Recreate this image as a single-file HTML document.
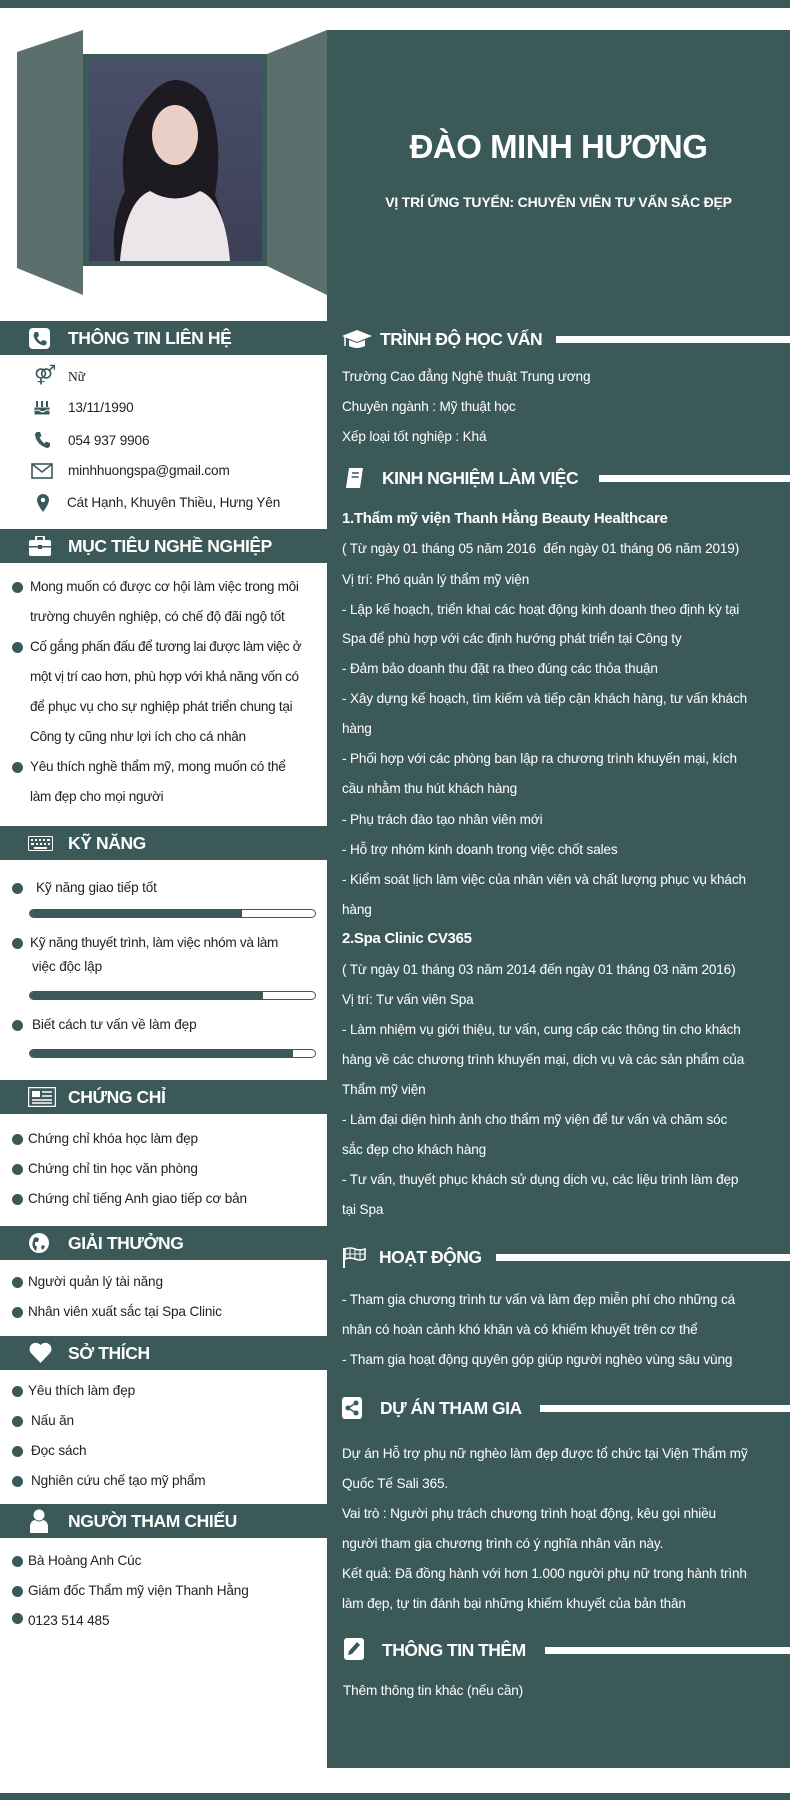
<!DOCTYPE html>
<html><head><meta charset="utf-8">
<style>
*{margin:0;padding:0;box-sizing:border-box}
body{width:790px;height:1800px;position:relative;background:#fff;font-family:"Liberation Sans",Arial,sans-serif;overflow:hidden;color:#222}
.a{position:absolute;white-space:nowrap}
.bar{position:absolute;background:#3c5959}
.t{position:absolute;white-space:nowrap;font-size:13.6px;line-height:20px;letter-spacing:-0.15px}
.w{color:#fff}
.lh{position:absolute;left:0;width:327px;height:34px;background:#3c5959}
.lh span{position:absolute;left:68px;top:7px;font-size:17.5px;font-weight:bold;color:#fff;line-height:20px;letter-spacing:-0.4px}
.rh{position:absolute;left:342px;height:24px;right:0}
.rh span{position:absolute;left:40px;top:2px;font-size:17.5px;font-weight:bold;color:#fff;line-height:20px;letter-spacing:-0.5px}
.rh i{position:absolute;right:0;height:7px;top:9px;background:#fff}
.dot{position:absolute;left:12px;width:11px;height:11px;border-radius:50%;background:#3c5959}
.sk{position:absolute;left:29px;width:287px;height:9px;border:1px solid #3c5959;border-radius:5px;overflow:hidden;background:#fff}
.sk b{display:block;height:100%;background:#3c5959}
</style></head><body>
<div class="bar" style="left:0;top:0;width:790px;height:8px"></div>
<div class="bar" style="left:327px;top:30px;width:463px;height:1738px"></div>
<div class="bar" style="left:0;top:1793px;width:790px;height:7px"></div>

<svg class="a" style="left:0;top:0" width="330" height="300">
<polygon points="17,52 83,30 83,295 17,268" fill="#5b706c"/>
<polygon points="267,54 327,30 327,295 267,266" fill="#5b706c"/>
<rect x="83" y="54" width="184" height="212" fill="#3c5959"/>
<defs><linearGradient id="g" x1="0" y1="0" x2="0" y2="1"><stop offset="0" stop-color="#4a4f6a"/><stop offset="1" stop-color="#3c3f55"/></linearGradient></defs>
<rect x="89" y="60" width="173" height="201" fill="url(#g)"/>
<path d="M150,95 q25,-30 55,0 q20,40 10,100 q15,40 10,66 h-110 q-5,-40 10,-70 q-10,-60 25,-96z" fill="#1d1a22"/>
<ellipse cx="175" cy="135" rx="23" ry="30" fill="#e9cfc6"/>
<path d="M120,261 q5,-60 30,-70 q25,15 50,0 q25,10 30,70z" fill="#ece6ea"/>
</svg>

<div class="a w" style="left:327px;width:463px;text-align:center;top:127px;font-size:33px;font-weight:bold;line-height:40px;letter-spacing:-0.5px">ĐÀO MINH HƯƠNG</div>
<div class="a w" style="left:327px;width:463px;text-align:center;top:191px;font-size:14px;font-weight:bold;line-height:22px;letter-spacing:-0.2px">VỊ TRÍ ỨNG TUYỂN: CHUYÊN VIÊN TƯ VẤN SẮC ĐẸP</div>

<!-- LEFT -->
<div class="lh" style="top:321px"><svg class="a" style="left:29px;top:7px" width="21" height="21"><rect width="21" height="21" rx="4" fill="#fff"/><path d="M6,4 l3,0 l1,4 l-2,1.5 q1.5,3 4,4.5 l1.5,-2 l4,1 l0,3 q-1,1.5 -3,1.5 q-8,-2 -10,-10 q0,-2 1.5,-3.5z" fill="#3c5959"/></svg><span>THÔNG TIN LIÊN HỆ</span></div>
<div class="t" style="left:34px;top:366px;font-size:19px;color:#3c5959">⚤</div>
<div class="t" style="left:68px;top:367px;font-family:'Liberation Serif',serif">Nữ</div>
<svg class="a" style="left:33px;top:398px" width="18" height="18"><path d="M1,9 h16 v8 h-16z M2,13 q3,-2 5,0 q3,2 5,0 q3,-2 5,0" fill="#3c5959" stroke="#fff" stroke-width="1"/><rect x="3" y="3" width="2" height="6" fill="#3c5959"/><rect x="8" y="3" width="2" height="6" fill="#3c5959"/><rect x="13" y="3" width="2" height="6" fill="#3c5959"/></svg>
<div class="t" style="left:68px;top:398px">13/11/1990</div>
<svg class="a" style="left:34px;top:431px" width="18" height="18"><path d="M3,1 l3,0 l1.5,4 l-2,1.5 q2,4 5,6 l1.5,-2 l4,1.5 l0,3 q-1,2 -3,2 q-10,-3 -12,-13 q0,-2 2,-3z" fill="#3c5959"/></svg>
<div class="t" style="left:68px;top:431px">054 937 9906</div>
<svg class="a" style="left:31px;top:463px" width="22" height="16"><rect x="1" y="1" width="20" height="14" fill="none" stroke="#3c5959" stroke-width="1.6"/><path d="M1,1 l10,8 l10,-8" fill="none" stroke="#3c5959" stroke-width="1.6"/></svg>
<div class="t" style="left:68px;top:461px">minhhuongspa@gmail.com</div>
<svg class="a" style="left:37px;top:494px" width="12" height="18"><path d="M6,0 a6,6 0 0 1 6,6 q0,4 -6,12 q-6,-8 -6,-12 a6,6 0 0 1 6,-6z" fill="#3c5959"/><circle cx="6" cy="6" r="2.2" fill="#fff"/></svg>
<div class="t" style="left:67px;top:493px">Cát Hạnh, Khuyên Thiều, Hưng Yên</div>

<div class="lh" style="top:529px"><svg class="a" style="left:29px;top:7px" width="22" height="20"><rect x="7" y="0" width="8" height="5" rx="1" fill="none" stroke="#fff" stroke-width="2"/><rect x="0" y="4" width="22" height="16" rx="2" fill="#fff"/><rect x="0" y="10" width="22" height="1.5" fill="#3c5959"/><rect x="9" y="9" width="4" height="4" fill="#3c5959"/></svg><span>MỤC TIÊU NGHỀ NGHIỆP</span></div>
<div class="dot" style="top:582px"></div><div class="t" style="left:30px;top:577px;letter-spacing:-0.3px">Mong muốn có được cơ hội làm việc trong môi</div>
<div class="t" style="left:30px;top:607px;letter-spacing:-0.3px">trường chuyên nghiệp, có chế độ đãi ngộ tốt</div>
<div class="dot" style="top:642px"></div><div class="t" style="left:30px;top:637px;letter-spacing:-0.45px">Cố gắng phấn đấu để tương lai được làm việc ở</div>
<div class="t" style="left:30px;top:667px;letter-spacing:-0.45px">một vị trí cao hơn, phù hợp với khả năng vốn có</div>
<div class="t" style="left:30px;top:697px;letter-spacing:-0.3px">để phục vụ cho sự nghiệp phát triển chung tại</div>
<div class="t" style="left:30px;top:727px;letter-spacing:-0.3px">Công ty cũng như lợi ích cho cá nhân</div>
<div class="dot" style="top:762px"></div><div class="t" style="left:30px;top:757px;letter-spacing:-0.3px">Yêu thích nghề thẩm mỹ, mong muốn có thể</div>
<div class="t" style="left:30px;top:787px;letter-spacing:-0.3px">làm đẹp cho mọi người</div>

<div class="lh" style="top:826px"><svg class="a" style="left:28px;top:10px" width="25" height="15"><rect x="0.5" y="0.5" width="24" height="14" rx="1" fill="none" stroke="#fff"/><path d="M3,3h2v2h-2zM7,3h2v2h-2zM11,3h2v2h-2zM15,3h2v2h-2zM19,3h3v2h-3zM3,7h3v2h-3zM8,7h2v2h-2zM12,7h2v2h-2zM16,7h2v2h-2zM20,7h2v2h-2zM6,11h13v2h-13z" fill="#fff"/></svg><span>KỸ NĂNG</span></div>
<div class="dot" style="top:883px"></div><div class="t" style="left:36px;top:878px">Kỹ năng giao tiếp tốt</div>
<div class="sk" style="top:909px"><b style="width:212px"></b></div>
<div class="dot" style="top:938px"></div><div class="t" style="left:30px;top:933px;letter-spacing:-0.3px">Kỹ năng thuyết trình, làm việc nhóm và làm</div>
<div class="t" style="left:32px;top:957px">việc độc lập</div>
<div class="sk" style="top:991px"><b style="width:233px"></b></div>
<div class="dot" style="top:1020px"></div><div class="t" style="left:32px;top:1015px">Biết cách tư vấn về làm đẹp</div>
<div class="sk" style="top:1049px"><b style="width:263px"></b></div>

<div class="lh" style="top:1080px"><svg class="a" style="left:28px;top:7px" width="28" height="20"><rect x="0.5" y="0.5" width="27" height="19" fill="none" stroke="#fff" stroke-width="1.5"/><rect x="4" y="4" width="8" height="6" fill="#fff"/><path d="M14,5h10M14,9h10M4,13h20M4,16h20" stroke="#fff" stroke-width="1.5"/></svg><span>CHỨNG CHỈ</span></div>
<div class="dot" style="top:1134px"></div><div class="t" style="left:28px;top:1129px">Chứng chỉ khóa học làm đẹp</div>
<div class="dot" style="top:1164px"></div><div class="t" style="left:28px;top:1159px">Chứng chỉ tin học văn phòng</div>
<div class="dot" style="top:1194px"></div><div class="t" style="left:28px;top:1189px">Chứng chỉ tiếng Anh giao tiếp cơ bản</div>

<div class="lh" style="top:1226px"><svg class="a" style="left:29px;top:7px" width="20" height="20"><circle cx="10" cy="10" r="10" fill="#fff"/><path d="M5,5 q3,-2 5,1 l-1,3 l-3,0 l0,3 l2,2 l-1,4 q-5,-4 -3,-10z M13,12 l3,1 l-2,4 l-2,-2z" fill="#3c5959"/></svg><span>GIẢI THƯỞNG</span></div>
<div class="dot" style="top:1277px"></div><div class="t" style="left:28px;top:1272px">Người quản lý tài năng</div>
<div class="dot" style="top:1307px"></div><div class="t" style="left:28px;top:1302px">Nhân viên xuất sắc tại Spa Clinic</div>

<div class="lh" style="top:1336px"><svg class="a" style="left:29px;top:6px" width="23" height="22"><path d="M11.5,21 L2,11 A5.5,5.5 0 0 1 11.5,3 A5.5,5.5 0 0 1 21,11 Z" fill="#fff"/></svg><span>SỞ THÍCH</span></div>
<div class="dot" style="top:1386px"></div><div class="t" style="left:28px;top:1381px">Yêu thích làm đẹp</div>
<div class="dot" style="top:1416px"></div><div class="t" style="left:31px;top:1411px">Nấu ăn</div>
<div class="dot" style="top:1446px"></div><div class="t" style="left:31px;top:1441px">Đọc sách</div>
<div class="dot" style="top:1476px"></div><div class="t" style="left:31px;top:1471px">Nghiên cứu chế tạo mỹ phẩm</div>

<div class="lh" style="top:1504px"><svg class="a" style="left:30px;top:5px" width="18" height="24"><circle cx="9" cy="6" r="5.5" fill="#fff"/><path d="M0,24 v-6 q0,-6 5,-7 q4,3 8,0 q5,1 5,7 v6z" fill="#fff"/></svg><span>NGƯỜI THAM CHIẾU</span></div>
<div class="dot" style="top:1556px"></div><div class="t" style="left:28px;top:1551px">Bà Hoàng Anh Cúc</div>
<div class="dot" style="top:1586px"></div><div class="t" style="left:28px;top:1581px">Giám đốc Thẩm mỹ viện Thanh Hằng</div>
<div class="dot" style="top:1613px"></div><div class="t" style="left:28px;top:1611px">0123 514 485</div>

<!-- RIGHT -->
<div class="rh" style="top:327px"><svg class="a" style="left:0;top:1px" width="30" height="22"><path d="M15,2 L30,8 L15,14 L0,8Z" fill="#fff"/><path d="M7,12 v6 q8,4 16,0 v-6 l-8,3z" fill="#fff"/><path d="M3,9 v9" stroke="#fff" stroke-width="1.5"/></svg><span style="left:38px">TRÌNH ĐỘ HỌC VẤN</span><i style="left:214px"></i></div>
<div class="t w" style="left:342px;top:367px">Trường Cao đẳng Nghệ thuật Trung ương</div>
<div class="t w" style="left:342px;top:397px">Chuyên ngành : Mỹ thuật học</div>
<div class="t w" style="left:342px;top:427px">Xếp loại tốt nghiệp : Khá</div>

<div class="rh" style="top:466px"><svg class="a" style="left:2px;top:2px" width="20" height="20"><path d="M5,0 h14 l-3,20 h-14z" fill="#fff"/><path d="M8,5h7M7.5,9h7" stroke="#3c5959" stroke-width="1.5"/></svg><span style="left:40px">KINH NGHIỆM LÀM VIỆC</span><i style="left:257px"></i></div>
<div class="t w" style="left:342px;top:509px;font-size:15px;font-weight:bold;letter-spacing:-0.3px">1.Thẩm mỹ viện Thanh Hằng Beauty Healthcare</div>
<div class="t w" style="left:342px;top:539px">( Từ ngày 01 tháng 05 năm 2016&nbsp; đến ngày 01 tháng 06 năm 2019)</div>
<div class="t w" style="left:342px;top:570px">Vị trí: Phó quản lý thẩm mỹ viện</div>
<div class="t w" style="left:342px;top:600px">- Lập kế hoạch, triển khai các hoạt động kinh doanh theo định kỳ tại</div>
<div class="t w" style="left:342px;top:629px">Spa để phù hợp với các định hướng phát triển tại Công ty</div>
<div class="t w" style="left:342px;top:659px">- Đảm bảo doanh thu đặt ra theo đúng các thỏa thuận</div>
<div class="t w" style="left:342px;top:689px">- Xây dựng kế hoạch, tìm kiếm và tiếp cận khách hàng, tư vấn khách</div>
<div class="t w" style="left:342px;top:719px">hàng</div>
<div class="t w" style="left:342px;top:749px">- Phối hợp với các phòng ban lập ra chương trình khuyến mại, kích</div>
<div class="t w" style="left:342px;top:779px">cầu nhằm thu hút khách hàng</div>
<div class="t w" style="left:342px;top:810px">- Phụ trách đào tạo nhân viên mới</div>
<div class="t w" style="left:342px;top:840px">- Hỗ trợ nhóm kinh doanh trong việc chốt sales</div>
<div class="t w" style="left:342px;top:870px">- Kiểm soát lịch làm việc của nhân viên và chất lượng phục vụ khách</div>
<div class="t w" style="left:342px;top:900px">hàng</div>
<div class="t w" style="left:342px;top:929px;font-size:15px;font-weight:bold;letter-spacing:-0.3px">2.Spa Clinic CV365</div>
<div class="t w" style="left:342px;top:960px">( Từ ngày 01 tháng 03 năm 2014 đến ngày 01 tháng 03 năm 2016)</div>
<div class="t w" style="left:342px;top:990px">Vị trí: Tư vấn viên Spa</div>
<div class="t w" style="left:342px;top:1020px">- Làm nhiệm vụ giới thiệu, tư vấn, cung cấp các thông tin cho khách</div>
<div class="t w" style="left:342px;top:1050px">hàng về các chương trình khuyến mại, dịch vụ và các sản phẩm của</div>
<div class="t w" style="left:342px;top:1080px">Thẩm mỹ viện</div>
<div class="t w" style="left:342px;top:1110px">- Làm đại diện hình ảnh cho thẩm mỹ viện để tư vấn và chăm sóc</div>
<div class="t w" style="left:342px;top:1140px">sắc đẹp cho khách hàng</div>
<div class="t w" style="left:342px;top:1170px">- Tư vấn, thuyết phục khách sử dụng dịch vụ, các liệu trình làm đẹp</div>
<div class="t w" style="left:342px;top:1200px">tại Spa</div>

<div class="rh" style="top:1245px"><svg class="a" style="left:0;top:1px" width="24" height="22"><path d="M2,2 v20" stroke="#fff" stroke-width="2"/><path d="M3,3 q5,-2 10,0 q5,2 10,0 v10 q-5,2 -10,0 q-5,-2 -10,0z" fill="none" stroke="#fff" stroke-width="1.5"/><path d="M8,3v10M13,3v10M18,3v10M3,8h20" stroke="#fff" stroke-width="1"/></svg><span style="left:37px">HOẠT ĐỘNG</span><i style="left:154px"></i></div>
<div class="t w" style="left:342px;top:1290px">- Tham gia chương trình tư vấn và làm đẹp miễn phí cho những cá</div>
<div class="t w" style="left:342px;top:1320px">nhân có hoàn cảnh khó khăn và có khiếm khuyết trên cơ thể</div>
<div class="t w" style="left:342px;top:1350px">- Tham gia hoạt động quyên góp giúp người nghèo vùng sâu vùng</div>

<div class="rh" style="top:1396px"><svg class="a" style="left:0;top:1px" width="20" height="22"><rect width="20" height="22" rx="3" fill="#fff"/><circle cx="14" cy="6" r="2.5" fill="#3c5959"/><circle cx="6" cy="11" r="2.5" fill="#3c5959"/><circle cx="14" cy="16" r="2.5" fill="#3c5959"/><path d="M14,6 L6,11 L14,16" stroke="#3c5959" stroke-width="1.5" fill="none"/></svg><span style="left:38px">DỰ ÁN THAM GIA</span><i style="left:198px"></i></div>
<div class="t w" style="left:342px;top:1444px">Dự án Hỗ trợ phụ nữ nghèo làm đẹp được tổ chức tại Viện Thẩm mỹ</div>
<div class="t w" style="left:342px;top:1474px">Quốc Tế Sali 365.</div>
<div class="t w" style="left:342px;top:1504px">Vai trò : Người phụ trách chương trình hoạt động, kêu gọi nhiều</div>
<div class="t w" style="left:342px;top:1534px">người tham gia chương trình có ý nghĩa nhân văn này.</div>
<div class="t w" style="left:342px;top:1564px">Kết quả: Đã đồng hành với hơn 1.000 người phụ nữ trong hành trình</div>
<div class="t w" style="left:342px;top:1594px">làm đẹp, tự tin đánh bại những khiếm khuyết của bản thân</div>

<div class="rh" style="top:1638px"><svg class="a" style="left:2px;top:0" width="20" height="22"><rect width="20" height="22" rx="3" fill="#fff"/><path d="M13,4 l3,3 l-8,9 l-4,1 l1,-4z" fill="#3c5959"/></svg><span style="left:40px">THÔNG TIN THÊM</span><i style="left:203px"></i></div>
<div class="t w" style="left:343px;top:1681px">Thêm thông tin khác (nếu cần)</div>
</body></html>
